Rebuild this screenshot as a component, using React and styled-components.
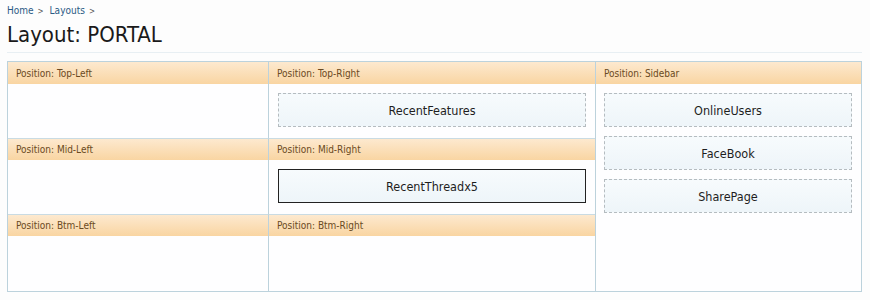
import styled, { createGlobalStyle, css } from 'styled-components';

const GlobalStyle = createGlobalStyle`
  body {
    margin: 0;
    background: #fdfdfd;
    font-family: "DejaVu Sans Condensed", "DejaVu Sans", sans-serif;
  }
`;

const Page = styled.div`
  padding: 5px 8px 0 7px;
  width: 855px;
`;

const Crumbs = styled.div`
  display: flex;
  gap: 6px;
  font-size: 10px;
  line-height: 12px;
  height: 12px;
`;

const Crumb = styled.a`
  color: #2a5a84;
  text-decoration: none;
  &::after {
    content: '>';
    color: #555;
    font-size: 8px;
    margin-left: 4px;
  }
`;

const Title = styled.h1`
  margin: 5px 0 0;
  font-size: 22px;
  line-height: 26px;
  font-weight: normal;
  color: #1a1a1a;
  padding-bottom: 4px;
  border-bottom: 1px solid #e8eff3;
`;

const Table = styled.div`
  margin-top: 8px;
  display: grid;
  grid-template-columns: 260px 327px 1fr;
  grid-template-rows: 22px 54px 22px 54px 22px 55px;
  border: 1px solid #bcd2dc;
  background: #fefeff;
`;

const Head = styled.div`
  display: flex;
  align-items: center;
  padding-left: 8px;
  font-size: 10px;
  color: #6a4a22;
  background: linear-gradient(#fde9cf, #f9d5a2);
  border-top: ${({ $first }) => ($first ? 'none' : '1px solid #c9dbe3')};
  border-left: ${({ $edge }) => ($edge ? '1px solid #bcd2dc' : 'none')};
`;

const Cell = styled.div`
  display: flex;
  flex-direction: column;
  gap: 9px;
  padding: 9px 9px 0;
  border-left: ${({ $edge }) => ($edge ? '1px solid #bcd2dc' : 'none')};
  ${({ $tall }) =>
    $tall &&
    css`
      grid-row: 2 / span 5;
      grid-column: 3;
      padding-left: 8px;
    `}
`;

const Block = styled.div`
  height: 32px;
  display: flex;
  align-items: center;
  justify-content: center;
  font-size: 12.5px;
  color: #1e1e1e;
  background: linear-gradient(#f7fbfd, #eef5f9);
  border: 1px dashed #b5bcc0;
  ${({ $active }) =>
    $active &&
    css`
      border: 1px solid #222;
    `}
`;

const rows = [
  ['Top-Left', 'Top-Right'],
  ['Mid-Left', 'Mid-Right'],
  ['Btm-Left', 'Btm-Right'],
];

const content = {
  'Top-Right': [{ name: 'RecentFeatures' }],
  'Mid-Right': [{ name: 'RecentThreadx5', active: true }],
};

const sidebar = ['OnlineUsers', 'FaceBook', 'SharePage'];

export default function App() {
  return (
    <>
      <GlobalStyle />
      <Page>
        <Crumbs>
          <Crumb href="#">Home</Crumb>
          <Crumb href="#">Layouts</Crumb>
        </Crumbs>
        <Title>Layout: PORTAL</Title>
        <Table>
          {rows.map(([left, right], i) => [
            <Head key={left} $first={i === 0}>Position: {left}</Head>,
            <Head key={right} $first={i === 0} $edge>Position: {right}</Head>,
            i === 0 && (
              <Head key="side" $first $edge>Position: Sidebar</Head>
            ),
            <Cell key={left + 'c'} />,
            <Cell key={right + 'c'} $edge>
              {(content[right] || []).map((b) => (
                <Block key={b.name} $active={b.active}>{b.name}</Block>
              ))}
            </Cell>,
            i === 0 && (
              <Cell key="sidec" $edge $tall>
                {sidebar.map((n) => (
                  <Block key={n}>{n}</Block>
                ))}
              </Cell>
            ),
          ])}
        </Table>
      </Page>
    </>
  );
}
